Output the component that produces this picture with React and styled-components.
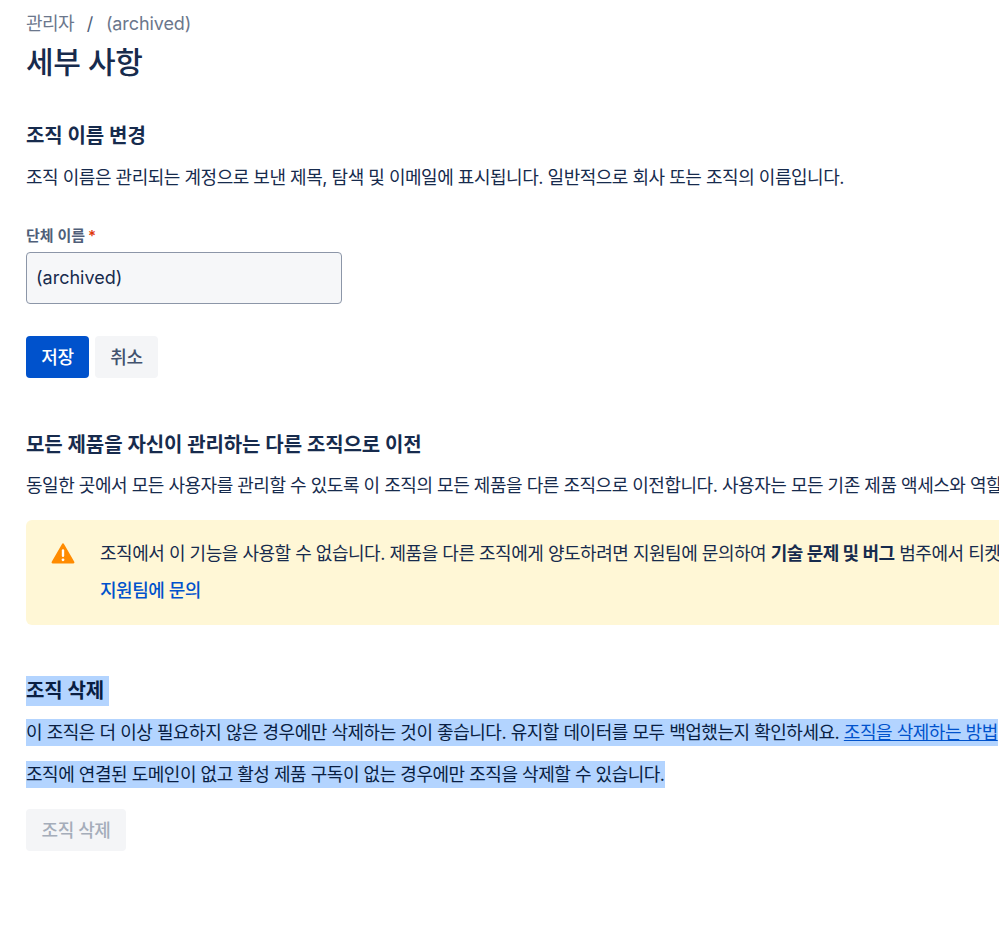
import React from "react";
import styled, { createGlobalStyle } from "styled-components";

const GlobalStyle = createGlobalStyle`
  html, body { margin: 0; padding: 0; background: #fff; overflow: hidden; }
  body {
    font-family: Inter, "Noto Sans CJK KR", sans-serif;
    color: #172b4d;
    -webkit-font-smoothing: antialiased;
  }
`;

const Page = styled.div`
  width: 999px;
  height: 929px;
  overflow: hidden;
  box-sizing: border-box;
  padding: 13px 0 0 26px;
`;

const Breadcrumbs = styled.nav`
  display: flex;
  align-items: center;
  height: 22px;
  font-size: 18px;
  line-height: 22px;
  color: #6b778c;
`;

const Crumb = styled.span`
  letter-spacing: ${(p) => p.$spacing}px;
`;

const Slash = styled.span`
  width: 32px;
  text-align: center;
  color: #505f79;
`;

const PageTitle = styled.h1`
  margin: 7px 0 0;
  font-size: 30px;
  line-height: 40px;
  font-weight: 500;
  letter-spacing: -0.4px;
`;

const Section = styled.section`
  margin-top: ${(p) => p.$top}px;
  white-space: nowrap;
`;

const Heading = styled.h2`
  margin: 0;
  font-size: 20px;
  line-height: 27px;
  font-weight: 600;
  letter-spacing: -0.1px;
`;

const Text = styled.p`
  margin: ${(p) => p.$top ?? 15}px 0 0;
  font-size: 18px;
  line-height: 27px;
  letter-spacing: -0.48px;
  color: #172b4d;
`;

const Label = styled.label`
  display: block;
  margin-top: 35px;
  font-size: 15px;
  line-height: 20px;
  font-weight: 600;
  color: #505f79;
`;

const Required = styled.span`
  color: #de350b;
  margin-left: 3px;
`;

const NameInput = styled.input`
  display: block;
  box-sizing: border-box;
  width: 316px;
  height: 52px;
  margin-top: 6px;
  padding: 0 9px 1px;
  border: 1px solid #8c96a8;
  border-radius: 4px;
  background: #f6f7f9;
  font: 400 18px Inter, "Noto Sans CJK KR", sans-serif;
  color: #172b4d;
`;

const Actions = styled.div`
  display: flex;
  gap: 6px;
  margin-top: ${(p) => p.$top}px;
`;

const Button = styled.button`
  box-sizing: border-box;
  width: ${(p) => p.$width}px;
  height: 42px;
  padding: 0 0 2px;
  border: none;
  border-radius: 4px;
  font: 500 18px Inter, "Noto Sans CJK KR", sans-serif;
  letter-spacing: -0.4px;
  background: ${(p) => (p.$primary ? "#0052cc" : "#f4f5f7")};
  color: ${(p) => (p.$primary ? "#fff" : p.disabled ? "#a5adba" : "#42526e")};
`;

const Notice = styled.div`
  display: flex;
  box-sizing: border-box;
  width: 1200px;
  height: 105px;
  margin-top: 21px;
  padding: 20px 0 0 24px;
  border-radius: 6px;
  background: #fff7d6;
`;

const NoticeIcon = styled.svg`
  flex: none;
  width: 26px;
  height: 26px;
  margin-right: 24px;
`;

const NoticeBody = styled.div`
  min-width: 0;
`;

const NoticeLink = styled.a`
  display: block;
  margin-top: 10px;
  font-size: 18px;
  line-height: 27px;
  font-weight: 500;
  letter-spacing: -0.48px;
  color: #0052cc;
`;

const Strong = styled.strong`
  font-weight: 700;
`;

const Mark = styled.span`
  background: #b3d4ff;
  color: #091e42;
  box-decoration-break: clone;
  padding: 3px 0;
`;

const MarkLink = styled.a`
  color: #0052cc;
  text-decoration: underline;
`;

function WarningIcon() {
  return (
    <NoticeIcon viewBox="0 0 24 24">
      <path
        d="M12.9 3.6c-.4-.8-1.4-.8-1.8 0L1.6 20.1c-.4.8.1 1.6.9 1.6h19c.8 0 1.3-.8.9-1.6L12.9 3.6z"
        fill="#ff8b00"
      />
      <rect x="10.9" y="8.5" width="2.2" height="7.2" rx="1.1" fill="#fff" />
      <circle cx="12" cy="18.3" r="1.3" fill="#fff" />
    </NoticeIcon>
  );
}

export default function App() {
  return (
    <>
      <GlobalStyle />
      <Page>
        <Breadcrumbs>
          <Crumb $spacing={-0.6}>관리자</Crumb>
          <Slash>/</Slash>
          <Crumb $spacing={-0.1}>(archived)</Crumb>
        </Breadcrumbs>
        <PageTitle>세부 사항</PageTitle>

        <Section $top={41}>
          <Heading>조직 이름 변경</Heading>
          <Text $top={14}>조직 이름은 관리되는 계정으로 보낸 제목, 탐색 및 이메일에 표시됩니다. 일반적으로 회사 또는 조직의 이름입니다.</Text>
          <Label>
            단체 이름<Required>*</Required>
          </Label>
          <NameInput defaultValue="(archived)" />
          <Actions $top={32}>
            <Button $primary $width={63}>저장</Button>
            <Button $width={63}>취소</Button>
          </Actions>
        </Section>

        <Section $top={54}>
          <Heading>모든 제품을 자신이 관리하는 다른 조직으로 이전</Heading>
          <Text $top={13}>동일한 곳에서 모든 사용자를 관리할 수 있도록 이 조직의 모든 제품을 다른 조직으로 이전합니다. 사용자는 모든 기존 제품 액세스와 역할을 유지합니다.</Text>
          <Notice>
            <WarningIcon />
            <NoticeBody>
              <Text $top={0}>
                조직에서 이 기능을 사용할 수 없습니다. 제품을 다른 조직에게 양도하려면 지원팀에 문의하여 <Strong>기술 문제 및 버그</Strong> 범주에서 티켓을 생성하세요.
              </Text>
              <NoticeLink>지원팀에 문의</NoticeLink>
            </NoticeBody>
          </Notice>
        </Section>

        <Section $top={53}>
          <Heading>
            <Mark>조직 삭제&nbsp;</Mark>
          </Heading>
          <Text $top={14}>
            <Mark>
              이 조직은 더 이상 필요하지 않은 경우에만 삭제하는 것이 좋습니다. 유지할 데이터를 모두 백업했는지 확인하세요. <MarkLink>조직을 삭제하는 방법</MarkLink>
            </Mark>
          </Text>
          <Text>
            <Mark>조직에 연결된 도메인이 없고 활성 제품 구독이 없는 경우에만 조직을 삭제할 수 있습니다.</Mark>
          </Text>
          <Actions $top={21}>
            <Button disabled $width={100}>조직 삭제</Button>
          </Actions>
        </Section>
      </Page>
    </>
  );
}
